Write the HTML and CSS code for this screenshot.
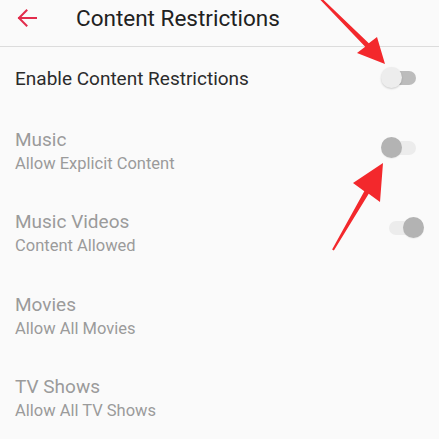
FILE: index.html
```html
<!DOCTYPE html>
<html>
<head>
<meta charset="utf-8">
<link rel="stylesheet" href="styles.css">
</head>
<body>
<div class="screen">
  <header class="appbar">
    <svg class="back" width="20" height="18" viewBox="0 0 20 18"><path d="M19 9H2 M9.5 1.5 L2 9 L9.5 16.5" fill="none" stroke="#e22c4c" stroke-width="2" stroke-linecap="square"/></svg>
    <h1 class="title">Content Restrictions</h1>
  </header>
  <div class="row row-main">
    <div class="label">Enable Content Restrictions</div>
    <div class="switch sw-off sw-a"><span class="track"></span><span class="thumb"></span></div>
  </div>
  <div class="row">
    <div class="texts"><div class="label dim">Music</div><div class="sub">Allow Explicit Content</div></div>
    <div class="switch sw-disabled sw-b"><span class="track"></span><span class="thumb"></span></div>
  </div>
  <div class="row">
    <div class="texts"><div class="label dim">Music Videos</div><div class="sub">Content Allowed</div></div>
    <div class="switch sw-disabled sw-on sw-c"><span class="track"></span><span class="thumb"></span></div>
  </div>
  <div class="row">
    <div class="texts"><div class="label dim">Movies</div><div class="sub">Allow All Movies</div></div>
  </div>
  <div class="row">
    <div class="texts"><div class="label dim">TV Shows</div><div class="sub">Allow All TV Shows</div></div>
  </div>
  <svg class="arrows" width="439" height="439" viewBox="0 0 439 439">
    <polygon fill="#f3282c" points="317.3,-3.3 365.2,46.7 357,53 385,64 377,37 368.8,43.3 318.7,-4.7"/>
    <polygon fill="#f3282c" points="332.1,249.5 364.3,191.3 353,183 383,163 380,202 368.7,193.7 333.9,250.5"/>
  </svg>
</div>
</body>
</html>
```
FILE: styles.css
```css
html, body { margin: 0; padding: 0; }
body { background: #fafafa; font-family: Roboto, "Noto Sans", sans-serif; }
.screen { position: relative; width: 439px; height: 439px; overflow: hidden; background: #fafafa; }
.appbar { display: flex; align-items: center; height: 46px; border-bottom: 1px solid #dcdcdc; box-sizing: content-box; }
.back { margin-left: 17px; margin-top: -11px; flex: none; }
.title { margin: -11px 0 0 39px; font-size: 22.5px; font-weight: 400; color: #212121; line-height: 26px; }
.row { display: flex; justify-content: space-between; align-items: flex-start; padding: 18px 0 16.5px 15px; }
.row-main { padding: 20.5px 0 21px 15px; }
.label { font-size: 19px; line-height: 22px; color: #2b2b2b; }
.label.dim { color: #9b9b9b; }
.sub { font-size: 16.5px; line-height: 26px; color: #9b9b9b; }
.switch { position: relative; width: 35px; height: 22px; flex: none; margin-right: 23px; }
.switch .track { position: absolute; left: 2px; right: 0; top: 4px; height: 14px; border-radius: 7px; background: #bcbcbc; }
.switch .thumb { position: absolute; left: 0; top: 0; width: 21px; height: 21px; border-radius: 50%; background: #ededed; box-shadow: 0 1px 2px rgba(0,0,0,0.18); }
.sw-disabled .track { background: #ececec; }
.sw-disabled .thumb { background: #b3b3b3; box-shadow: 0 1px 1px rgba(0,0,0,0.05); }
.sw-on .track { left: 0; right: 2px; }
.sw-on .thumb { left: auto; right: 0; }
.sw-a { margin-top: -1px; }
.sw-b { margin-top: 8.5px; }
.sw-c { margin-top: 6px; margin-right: 15px; }
.arrows { position: absolute; left: 0; top: 0; pointer-events: none; }
```
